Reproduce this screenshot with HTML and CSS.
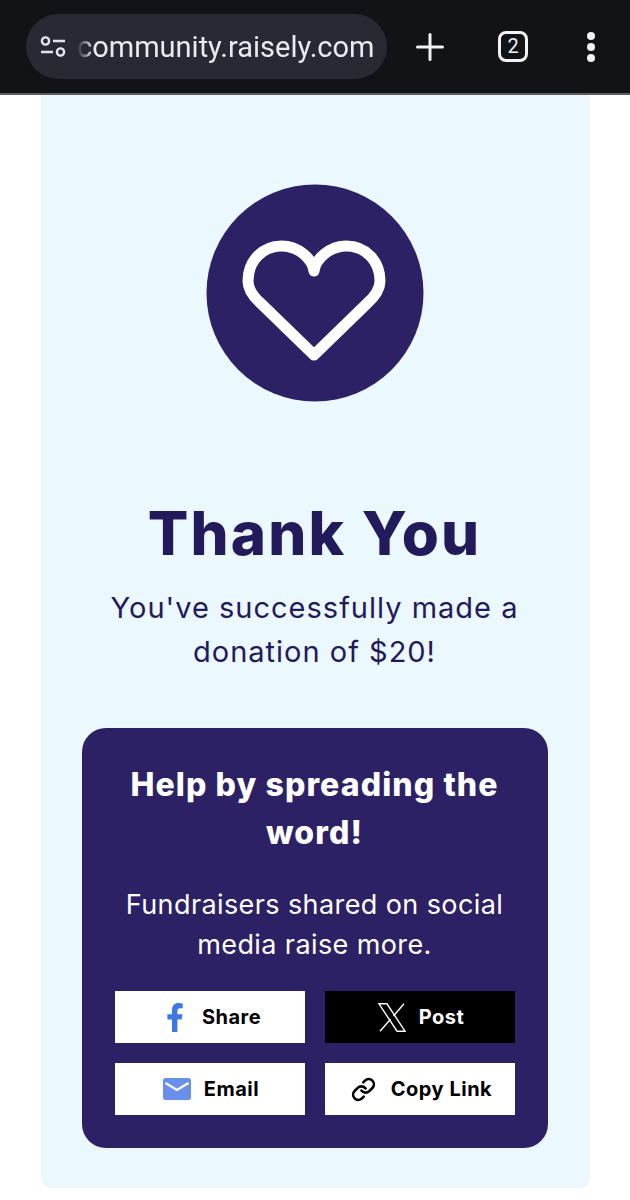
FILE: index.html
```html
<!DOCTYPE html>
<html lang="en">
<head>
    <meta charset="UTF-8">
    <meta name="viewport" content="width=device-width, initial-scale=1.0">
    <title>Thank You</title>
    <link rel="stylesheet" href="styles.css">
</head>
<body>
    <header class="toolbar">
        <div class="url-bar">
            <svg class="tune-icon" width="26" height="22" viewBox="0 0 26 22" fill="none" stroke="#e3e5ea" stroke-width="2.4">
                <circle cx="5.5" cy="5" r="3.6"/>
                <path d="M13 5h12"/>
                <path d="M1 16h12"/>
                <circle cx="20.5" cy="16" r="3.6"/>
            </svg>
            <span class="url-text">community.raisely.com</span>
        </div>
        <svg class="plus-icon" width="28" height="28" viewBox="0 0 28 28" fill="none" stroke="#f1f2f4" stroke-width="3" stroke-linecap="round">
            <path d="M14 1.5v25"/>
            <path d="M1.5 14h25"/>
        </svg>
        <div class="tab-count">2</div>
        <div class="menu-dots">
            <span></span>
            <span></span>
            <span></span>
        </div>
    </header>

    <main class="card">
        <svg class="heart-badge" width="218" height="218" viewBox="0 0 218 218">
            <circle cx="109" cy="109" r="108.5" fill="#2d2166"/>
            <path d="M108 87C106.500 75 92.500 62 75.500 62C56.500 62 42 77 42 97C42 106 47.500 113 55.500 120L108 171L160.500 120C168.500 113 174 106 174 97C174 77 159.500 62 140.500 62C123.500 62 109.500 75 108 87" fill="none" stroke="#fff" stroke-width="11" stroke-linecap="round" stroke-linejoin="round"/>
        </svg>

        <h1>Thank You</h1>
        <p class="subtitle">You've successfully made a<br>donation of $20!</p>

        <section class="share-box">
            <h2>Help by spreading the word!</h2>
            <p>Fundraisers shared on social media raise more.</p>

            <div class="share-grid">
                <button class="share-btn">
                    <span class="btn-icon">
                        <svg width="16" height="29" viewBox="0 0 16 29">
                            <path d="M10.400 29V16.400h4.200l.9-5.200h-5.100V8c0-1.500.7-2.800 2.900-2.800h2.400V.6C14.600.3 13.300 0 11.700 0 7.600 0 5 2.500 5 7.100v4.100H.4v5.200H5V29z" fill="#3d78e3"/>
                        </svg>
                    </span>
                    Share
                </button>
                <button class="share-btn share-btn-dark">
                    <span class="btn-icon">
                        <svg width="28" height="29" viewBox="0 0 28 29" fill="none" stroke="#fff" stroke-width="1.4">
                            <path d="M1 .8h8l18 27.400h-8z"/>
                            <path d="M26 .8 15.500 13"/>
                            <path d="M12.500 16.200 2 28.200"/>
                        </svg>
                    </span>
                    Post
                </button>
                <button class="share-btn">
                    <span class="btn-icon">
                        <svg width="28" height="22" viewBox="0 0 28 22">
                            <rect width="28" height="22" rx="2.5" fill="#6a8fea"/>
                            <path d="M2.500 5 14 12 25.500 5" fill="none" stroke="#fff" stroke-width="2.2"/>
                        </svg>
                    </span>
                    Email
                </button>
                <button class="share-btn">
                    <span class="btn-icon">
                        <svg width="25" height="25" viewBox="0 0 24 24" fill="none" stroke="#000" stroke-width="2.5" stroke-linecap="round" stroke-linejoin="round">
                            <path d="M10 13a5 5 0 0 0 7.540.540l3-3a5 5 0 0 0-7.070-7.070l-1.720 1.710"/>
                            <path d="M14 11a5 5 0 0 0-7.540-.540l-3 3a5 5 0 0 0 7.070 7.070l1.710-1.710"/>
                        </svg>
                    </span>
                    Copy Link
                </button>
            </div>
        </section>
    </main>
</body>
</html>
```

FILE: styles.css
```css
body {
    margin: 0;
    background: #fff;
    font-family: 'Inter', 'Liberation Sans', sans-serif;
    overflow: hidden;
}

.toolbar {
    height: 93px;
    border-bottom: 2px solid #5b5d62;
    background: #121316;
    display: flex;
    align-items: center;
    padding: 0 0 0 26px;
}

.url-bar {
    width: 361px;
    height: 65px;
    border-radius: 33px;
    background: #272a33;
    display: flex;
    align-items: center;
    box-sizing: border-box;
    padding-left: 14px;
    overflow: hidden;
}

.tune-icon {
    flex-shrink: 0;
}

.url-text {
    margin-left: 11px;
    color: #e8eaed;
    font-family: 'Roboto', sans-serif;
    font-size: 29px;
    white-space: nowrap;
    -webkit-mask-image: linear-gradient(90deg, transparent 0, #000 16px);
    mask-image: linear-gradient(90deg, transparent 0, #000 16px);
}

.plus-icon {
    margin-left: 29px;
}

.tab-count {
    width: 24px;
    height: 25px;
    margin-left: 54px;
    border: 3px solid #f1f2f4;
    border-radius: 8px;
    color: #f1f2f4;
    font-family: 'Roboto', sans-serif;
    font-size: 20px;
    line-height: 25px;
    text-align: center;
}

.menu-dots {
    margin-left: 59px;
    display: flex;
    flex-direction: column;
    gap: 3px;
}

.menu-dots span {
    width: 8px;
    height: 8px;
    border-radius: 50%;
    background: #f1f2f4;
}

.card {
    width: 549px;
    height: 1093px;
    margin-left: 41px;
    box-sizing: border-box;
    padding: 89px 42px 0 40px;
    border-radius: 0 0 10px 10px;
    background: #ebf8fe;
    color: #231a5c;
    display: flex;
    flex-direction: column;
    align-items: center;
    text-align: center;
}

.heart-badge {
    display: block;
    flex-shrink: 0;
}

h1 {
    margin: 92px 0 0;
    font-size: 60px;
    line-height: 78px;
    font-weight: 800;
    letter-spacing: 2.2px;
}

.subtitle {
    margin: 14px 0 0;
    font-size: 29px;
    line-height: 44px;
    letter-spacing: 1px;
}

.share-box {
    width: 466px;
    height: 420px;
    margin-top: 54px;
    box-sizing: border-box;
    padding: 33px 33px 0;
    border-radius: 24px;
    background: #2d2166;
    color: #fff;
}

h2 {
    margin: 0;
    font-size: 32px;
    line-height: 48px;
    font-weight: 800;
    letter-spacing: 1.1px;
}

.share-box p {
    margin: 28px 0 0;
    font-size: 27px;
    line-height: 39.5px;
    letter-spacing: 0.4px;
}

.share-grid {
    margin-top: 27px;
    display: grid;
    grid-template-columns: 190px 190px;
    grid-auto-rows: 52px;
    gap: 20px;
}

.share-btn {
    border: none;
    padding: 0 0 0 3px;
    background: #fff;
    color: #000;
    font-family: inherit;
    font-size: 20px;
    font-weight: 700;
    letter-spacing: 0.5px;
    display: flex;
    align-items: center;
    justify-content: center;
    gap: 13px;
}

.share-btn-dark {
    background: #000;
    color: #fff;
}

.btn-icon {
    width: 28px;
    display: flex;
    justify-content: center;
}
```
